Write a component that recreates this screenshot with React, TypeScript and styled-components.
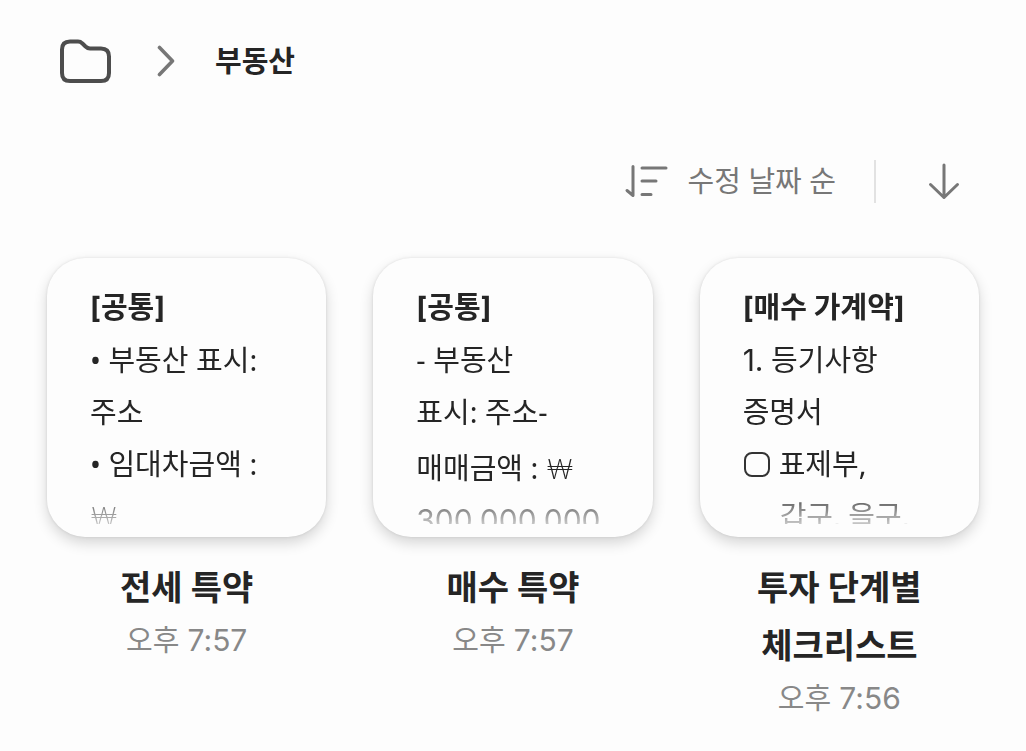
import React from "react";
import styled, { createGlobalStyle } from "styled-components";

const GlobalStyle = createGlobalStyle`
  * { box-sizing: border-box; }
  body {
    margin: 0;
    background: #fdfdfd;
    color: #252525;
    font-family: Inter, "Noto Sans CJK KR", sans-serif;
    font-size: 29px;
  }
`;

const Page = styled.div`
  padding: 31px 47px 0;
`;

const Breadcrumb = styled.nav`
  display: flex;
  align-items: center;
  height: 60px;
  padding-left: 12px;
`;

const FolderLink = styled.a`
  display: flex;
  margin-right: 44px;
`;

const Current = styled.h1`
  margin: 2px 0 0 39px;
  font-size: 29px;
  line-height: 60px;
  font-weight: 700;
`;

const Toolbar = styled.div`
  display: flex;
  justify-content: flex-end;
  align-items: center;
  height: 44px;
  margin: 68px 0 55px;
  padding-right: 19px;
`;

const ToolButton = styled.button`
  display: flex;
  align-items: center;
  gap: 20px;
  padding: 0;
  border: 0;
  background: none;
  color: #777;
  font: 29px "Noto Sans", "Noto Sans CJK KR", sans-serif;
  line-height: 44px;
`;

const Divider = styled.span`
  width: 2px;
  height: 43px;
  margin: 0 52px 0 38px;
  background: #e2e2e2;
`;

const Grid = styled.main`
  display: grid;
  grid-template-columns: repeat(3, minmax(0, 1fr));
  gap: 47px;
`;

const Note = styled.article`
  text-align: center;
`;

const Card = styled.section`
  aspect-ratio: 1;
  padding: 24px 0 13px 43px;
  border-radius: 38px;
  background: #fdfdfd;
  box-shadow: 0 6px 14px rgba(0, 0, 0, 0.16), 0 0 3px rgba(0, 0, 0, 0.1);
  text-align: left;
`;

const Preview = styled.div`
  height: 100%;
  overflow: hidden;
  mask-image: linear-gradient(#000 204px, rgba(0, 0, 0, 0.25) 100%);
`;

const Heading = styled.p`
  margin: 0;
  line-height: 52px;
  font-weight: 700;
  white-space: nowrap;
`;

const Line = styled.p<{ $tall?: boolean; $indent?: boolean }>`
  margin: 0;
  padding-top: ${(p) => (p.$tall ? 4 : 0)}px;
  padding-left: ${(p) => (p.$indent ? 37 : 0)}px;
  font-family: "Noto Sans", "Noto Sans CJK KR", sans-serif;
  line-height: 52px;
  white-space: nowrap;
`;

const Won = styled.span`
  font-family: Lato, sans-serif;
  font-size: 27px;
  font-weight: 300;
  line-height: 1;
`;

const Figure = styled.span`
  font-family: Inter, sans-serif;
  font-size: 30px;
  line-height: 1;
`;

const CheckLine = styled.label`
  display: flex;
  align-items: center;
  gap: 9px;
  height: 52px;
  padding-left: 1px;
  font-family: "Noto Sans", "Noto Sans CJK KR", sans-serif;
  line-height: 52px;
`;

const Check = styled.input`
  appearance: none;
  width: 26px;
  height: 25px;
  margin: 0;
  border: 2px solid #333;
  border-radius: 8px;
`;

const Title = styled.h2`
  margin: 22px 0 0;
  font-size: 34px;
  line-height: 58px;
  font-weight: 700;
`;

const Time = styled.time`
  display: block;
  color: #888;
  line-height: 48px;
`;

const FolderIcon = () => (
  <svg width="53" height="46" viewBox="0 0 53 46" fill="none" stroke="#4d4d4d" strokeWidth="4" strokeLinejoin="round">
    <path d="M11 3.500H19Q21.500 3.500 23.200 5.300L26.500 8.500Q28.700 10.500 31 10.500H42Q50 10.500 50 18.500V35Q50 43 42 43H11Q3 43 3 35V11.500Q3 3.500 11 3.500Z" />
  </svg>
);

const ChevronIcon = () => (
  <svg width="20" height="32" viewBox="0 0 20 32" fill="none" stroke="#777" strokeWidth="3.600" strokeLinecap="round" strokeLinejoin="round">
    <path d="M3.500 2.500L16.500 16L3.500 29.500" />
  </svg>
);

const SortIcon = () => (
  <svg width="44" height="36" viewBox="0 0 44 36" fill="none" stroke="#777" strokeWidth="3" strokeLinecap="round" strokeLinejoin="round">
    <path d="M3 27.500L9 32.500V3.500M18 5H42M18 18H32M18 31.500H27" />
  </svg>
);

const ArrowIcon = () => (
  <svg width="32" height="38" viewBox="0 0 32 38" fill="none" stroke="#777" strokeWidth="3" strokeLinecap="round" strokeLinejoin="round">
    <path d="M16 3V35.500M2.500 22.500L16 35.500L29.500 22.500" />
  </svg>
);

export default function App() {
  return (
    <>
      <GlobalStyle />
      <Page>
        <Breadcrumb>
          <FolderLink href="#folders" aria-label="폴더">
            <FolderIcon />
          </FolderLink>
          <ChevronIcon />
          <Current>부동산</Current>
        </Breadcrumb>
        <Toolbar>
          <ToolButton type="button">
            <SortIcon />
            수정 날짜 순
          </ToolButton>
          <Divider />
          <ToolButton type="button" aria-label="내림차순">
            <ArrowIcon />
          </ToolButton>
        </Toolbar>
        <Grid>
          <Note>
            <Card>
              <Preview>
                <Heading>[공통]</Heading>
                <Line>• 부동산 표시:</Line>
                <Line>주소</Line>
                <Line>• 임대차금액 :</Line>
                <Line><Won>₩</Won></Line>
              </Preview>
            </Card>
            <Title>전세 특약</Title>
            <Time>오후 <Figure>7:57</Figure></Time>
          </Note>
          <Note>
            <Card>
              <Preview>
                <Heading>[공통]</Heading>
                <Line>- 부동산</Line>
                <Line>표시: 주소-</Line>
                <Line $tall>매매금액 : <Won>₩</Won></Line>
                <Line><Figure>300,000,000</Figure></Line>
              </Preview>
            </Card>
            <Title>매수 특약</Title>
            <Time>오후 <Figure>7:57</Figure></Time>
          </Note>
          <Note>
            <Card>
              <Preview>
                <Heading>[매수 가계약]</Heading>
                <Line><Figure>1.</Figure> 등기사항</Line>
                <Line>증명서</Line>
                <CheckLine>
                  <Check type="checkbox" />
                  표제부,
                </CheckLine>
                <Line $indent>갑구, 을구,</Line>
              </Preview>
            </Card>
            <Title>투자 단계별<br />체크리스트</Title>
            <Time>오후 <Figure>7:56</Figure></Time>
          </Note>
        </Grid>
      </Page>
    </>
  );
}
